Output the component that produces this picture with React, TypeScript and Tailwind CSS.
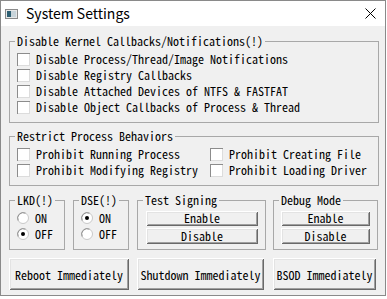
import React from "react";

const MONO = "font-['Noto_Sans_Mono_CJK_SC','Liberation_Mono',monospace]";

function Checkbox({ label }: { label: string }) {
  return (
    <div className="flex h-[16px] items-center">
      <span className="h-[13px] w-[13px] shrink-0 bg-white shadow-[inset_1px_1px_0_#8c8c8c,inset_-1px_-1px_0_#dcdcdc]" />
      <span className="ml-[6px] whitespace-nowrap leading-[16px]">{label}</span>
    </div>
  );
}

function Radio({ label, checked }: { label: string; checked?: boolean }) {
  return (
    <div className="flex h-[16px] items-center">
      <svg width="12" height="12" viewBox="0 0 12 12" className="shrink-0">
        <circle cx="6" cy="6" r="5.5" fill="#fff" stroke="#c8c8c8" />
        <path d="M1.2 8.5 A5.5 5.5 0 0 1 8.5 1.2" fill="none" stroke="#8c8c8c" strokeWidth="1" />
        {checked && <circle cx="6" cy="6" r="2" fill="#000" />}
      </svg>
      <span className="ml-[6px] whitespace-nowrap leading-[16px]">{label}</span>
    </div>
  );
}

function Btn({ label, className }: { label: string; className: string }) {
  return (
    <button
      className={
        "flex items-center justify-center whitespace-nowrap bg-[#f0f0f0] leading-[13px] text-black shadow-[inset_1px_1px_0_#fff,inset_-1px_-1px_0_#696969,inset_2px_2px_0_#e3e3e3,inset_-2px_-2px_0_#a0a0a0] " +
        className
      }
    >
      {label}
    </button>
  );
}

function Group({
  title,
  className,
  children,
}: {
  title: string;
  className: string;
  children: React.ReactNode;
}) {
  return (
    <fieldset className={"shrink-0 border border-[#a8a8a8] " + className}>
      <legend className="ml-[5px] px-[2px] leading-[14px] whitespace-nowrap">{title}</legend>
      {children}
    </fieldset>
  );
}

export default function App() {
  return (
    <div className="h-[299px] w-[387px] bg-white">
      <div
        className={
          "flex h-[296px] w-[386px] flex-col border border-[#8a8a8a] bg-[#f0f0f0] text-[12px] text-black " +
          MONO
        }
      >
        {/* Title bar */}
        <div className="flex h-[25px] shrink-0 items-center bg-white font-['Noto_Sans_CJK_SC','Noto_Sans',sans-serif]">
          <svg width="13" height="10" viewBox="0 0 13 10" className="ml-[4px]">
            <rect x="0.5" y="0.5" width="12" height="9" fill="#e8e8e8" stroke="#8a8a8a" />
            <rect x="2" y="2" width="4" height="6" fill="#2e5f73" />
            <rect x="6" y="2" width="5" height="6" fill="#c8d4da" />
          </svg>
          <span className="ml-[8px] text-[14px] leading-[25px]">System Settings</span>
          <svg width="11" height="11" viewBox="0 0 11 11" className="ml-auto mr-[9px]">
            <path d="M0.5 0.5 L10.5 10.5 M10.5 0.5 L0.5 10.5" stroke="#000" strokeWidth="1" />
          </svg>
        </div>

        {/* Body */}
        <div className="flex flex-col pl-[8px] pt-[8px]">
          <Group title="Disable Kernel Callbacks/Notifications(!)" className="h-[89px] w-[370px]">
            <div className="flex flex-col pl-[7px] pt-[3px]">
              <Checkbox label="Disable Process/Thread/Image Notifications" />
              <Checkbox label="Disable Registry Callbacks" />
              <Checkbox label="Disable Attached Devices of NTFS & FASTFAT" />
              <Checkbox label="Disable Object Callbacks of Process & Thread" />
            </div>
          </Group>

          <Group title="Restrict Process Behaviors" className="mt-[6px] h-[57px] w-[370px]">
            <div className="grid grid-cols-[193px_1fr] pl-[7px] pt-[3px]">
              <Checkbox label="Prohibit Running Process" />
              <Checkbox label="Prohibit Creating File" />
              <Checkbox label="Prohibit Modifying Registry" />
              <Checkbox label="Prohibit Loading Driver" />
            </div>
          </Group>

          <div className="mt-[7px] flex">
            <Group title="LKD(!)" className="h-[57px] w-[56px]">
              <div className="flex flex-col pl-[7px] pt-[3px]">
                <Radio label="ON" />
                <Radio label="OFF" checked />
              </div>
            </Group>
            <Group title="DSE(!)" className="ml-[8px] h-[57px] w-[56px]">
              <div className="flex flex-col pl-[7px] pt-[3px]">
                <Radio label="ON" checked />
                <Radio label="OFF" />
              </div>
            </Group>
            <Group title="Test Signing" className="ml-[8px] h-[57px] w-[129px]">
              <div className="flex flex-col gap-[2px] pl-[8px] pt-[4px]">
                <Btn label="Enable" className="h-[15px] w-[112px] pb-[2px]" />
                <Btn label="Disable" className="h-[16px] w-[112px] pb-[2px]" />
              </div>
            </Group>
            <Group title="Debug Mode" className="ml-[7px] h-[57px] w-[105px]">
              <div className="flex flex-col gap-[2px] pl-[7px] pt-[4px]">
                <Btn label="Enable" className="h-[15px] w-[89px] pb-[2px]" />
                <Btn label="Disable" className="h-[16px] w-[89px] pb-[2px]" />
              </div>
            </Group>
          </div>

          <div className="mt-[8px] flex">
            <Btn label="Reboot Immediately" className="h-[32px] w-[120px]" />
            <Btn label="Shutdown Immediately" className="ml-[8px] h-[32px] w-[127px]" />
            <Btn label="BSOD Immediately" className="ml-[9px] h-[32px] w-[103px]" />
          </div>
        </div>
      </div>
    </div>
  );
}
